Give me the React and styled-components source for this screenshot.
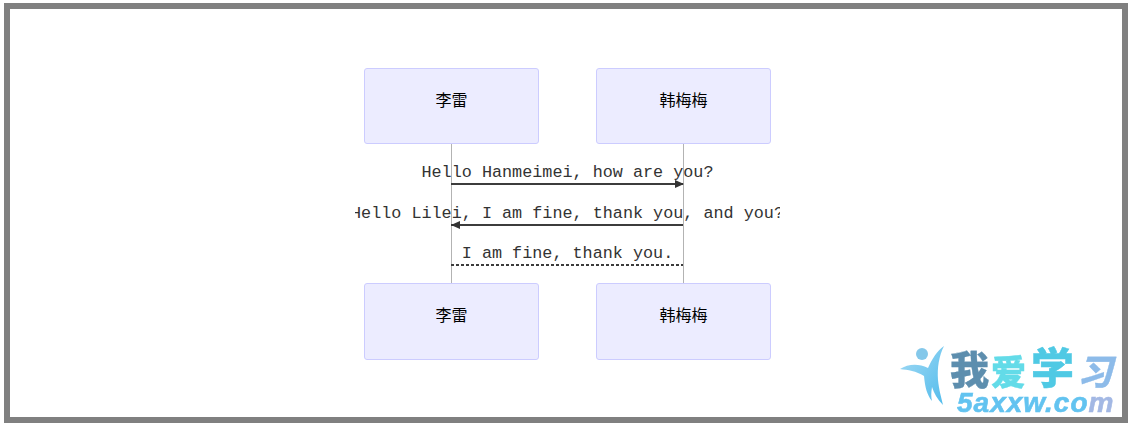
import React from "react";
import styled, { createGlobalStyle } from "styled-components";

const GlobalStyle = createGlobalStyle`
	html, body {
		margin: 0;
		padding: 0;
		background: #fff;
	}
`;

const Frame = styled.div`
	position: relative;
	box-sizing: border-box;
	width: 1124px;
	height: 420px;
	margin: 3px 0 0 4px;
	border: 6px solid #808080;
	padding: 59px 0 0 345px;
	overflow: hidden;
`;

const Diagram = styled.div`
	width: 425px;
	overflow: hidden;
`;

const ActorRow = styled.div`
	display: flex;
	gap: 57px;
	padding-left: 9px;
`;

const Actor = styled.div`
	box-sizing: border-box;
	display: flex;
	align-items: center;
	justify-content: center;
	width: 175px;
	height: ${p => p.$h}px;
	padding-bottom: ${p => p.$h - 62}px;
	background: #ececff;
	border: 1px solid #ccccff;
	border-radius: 3px;
	font-family: "Liberation Sans", "Noto Sans CJK SC", sans-serif;
	font-size: 16px;
	color: #000;
`;

const Messages = styled.div`
	position: relative;
	display: flex;
	flex-direction: column;
	height: 139px;
`;

const Lifeline = styled.div`
	position: absolute;
	top: 0;
	bottom: 0;
	left: ${p => p.$x}px;
	width: 1px;
	background: #b3b3b3;
`;

const Message = styled.div`
	position: relative;
	display: flex;
	flex-direction: column;
	justify-content: flex-end;
	align-items: flex-start;
	height: ${p => p.$h}px;
`;

const MessageText = styled.div`
	display: flex;
	justify-content: center;
	width: 425px;
	margin-bottom: -2px;
	font-family: "Liberation Mono", monospace;
	font-size: 16.8px;
	line-height: 19px;
	white-space: pre;
	color: #333;
`;

const ArrowSvg = styled.svg`
	display: block;
	margin: 0 0 -4px 96px;
	overflow: visible;
`;

const Watermark = styled.div`
	position: absolute;
	right: 4px;
	bottom: 1px;
	display: flex;
	width: 218px;
	height: 70px;
	filter: blur(0.5px);
`;

const Figure = styled.svg`
	flex: none;
	display: block;
`;

const LogoText = styled.div`
	display: flex;
	flex-direction: column;
	align-items: flex-start;
`;

const LogoTitle = styled.div`
	display: flex;
	align-items: flex-end;
	height: 41px;
	margin-bottom: 3px;
`;

const LogoChar = styled.span`
	font-family: "Noto Sans CJK SC", sans-serif;
	font-weight: 900;
	font-size: ${p => p.$size}px;
	line-height: 1;
	margin-right: ${p => p.$gap}px;
	color: ${p => p.$color};
	-webkit-text-stroke: 0.4px ${p => p.$color};
	transform: ${p => p.$skew ? "skewX(-14deg)" : "none"};
`;

const LogoUrl = styled.span`
	margin-left: 7px;
	font-family: "Liberation Sans", sans-serif;
	font-weight: 700;
	font-style: italic;
	font-size: 28px;
	line-height: 26px;
	letter-spacing: 1px;
	white-space: pre;
	color: #62c3f0;
	-webkit-text-stroke: 0.6px currentColor;
`;

const LogoUrlEnd = styled.span`
	color: #a3b8e4;
`;

function Arrow({ dir, dashed }) {
	return (
		<ArrowSvg width="232" height="8" viewBox="0 0 232 8">
			<line
				x1="0"
				y1="4"
				x2="232"
				y2="4"
				stroke="#3c3c3c"
				strokeWidth="2"
				strokeDasharray={dashed ? "3 2" : undefined}
			/>
			{dir === "right" && <path d="M224 0 L233 4 L224 8 Z" fill="#333" />}
			{dir === "left" && <path d="M9 0 L0 4 L9 8 Z" fill="#333" />}
		</ArrowSvg>
	);
}

const messages = [
	{ text: "Hello Hanmeimei, how are you?", dir: "right", h: 40 },
	{ text: "Hello Lilei, I am fine, thank you, and you?", dir: "left", h: 41 },
	{ text: "I am fine, thank you.", dashed: true, h: 40 }
];

function Actors({ h }) {
	return (
		<ActorRow>
			<Actor $h={h}>李雷</Actor>
			<Actor $h={h}>韩梅梅</Actor>
		</ActorRow>
	);
}

export default function App() {
	return (
		<>
			<GlobalStyle />
			<Frame>
				<Diagram>
					<Actors h={76} />
					<Messages>
						<Lifeline $x={96} />
						<Lifeline $x={328} />
						{messages.map(m => (
							<Message key={m.text} $h={m.h}>
								<MessageText>{m.text}</MessageText>
								<Arrow dir={m.dir} dashed={m.dashed} />
							</Message>
						))}
					</Messages>
					<Actors h={77} />
				</Diagram>
				<Watermark>
					<Figure width="50" height="70" viewBox="0 0 50 70">
						<defs>
							<linearGradient id="body" x1="0" y1="0" x2="1" y2="1">
								<stop offset="0" stopColor="#a4daf4" />
								<stop offset="1" stopColor="#52bcec" />
							</linearGradient>
						</defs>
						<circle cx="22" cy="8" r="6" fill="#84c8ea" />
						<path
							d="M0 23 C8 18 18 17 28 22 C32 13 37 5 44 0 C39 10 37 22 38 34 C39 44 41 50 43 59 C37 53 34 47 32 41 C31 47 31 51 32 55 C27 49 25 41 24 30 C16 25 8 24 0 23 Z"
							fill="url(#body)"
						/>
					</Figure>
					<LogoText>
						<LogoTitle>
							<LogoChar $size={39} $gap={2} $color="#5d8eae">我</LogoChar>
							<LogoChar $size={35} $gap={5} $color="#63dbe8">爱</LogoChar>
							<LogoChar $size={43} $gap={7} $color="#4fc9e4">学</LogoChar>
							<LogoChar $size={35} $gap={0} $color="#8dbbe9" $skew>习</LogoChar>
						</LogoTitle>
						<LogoUrl>5axxw.co<LogoUrlEnd>m</LogoUrlEnd></LogoUrl>
					</LogoText>
				</Watermark>
			</Frame>
		</>
	);
}
